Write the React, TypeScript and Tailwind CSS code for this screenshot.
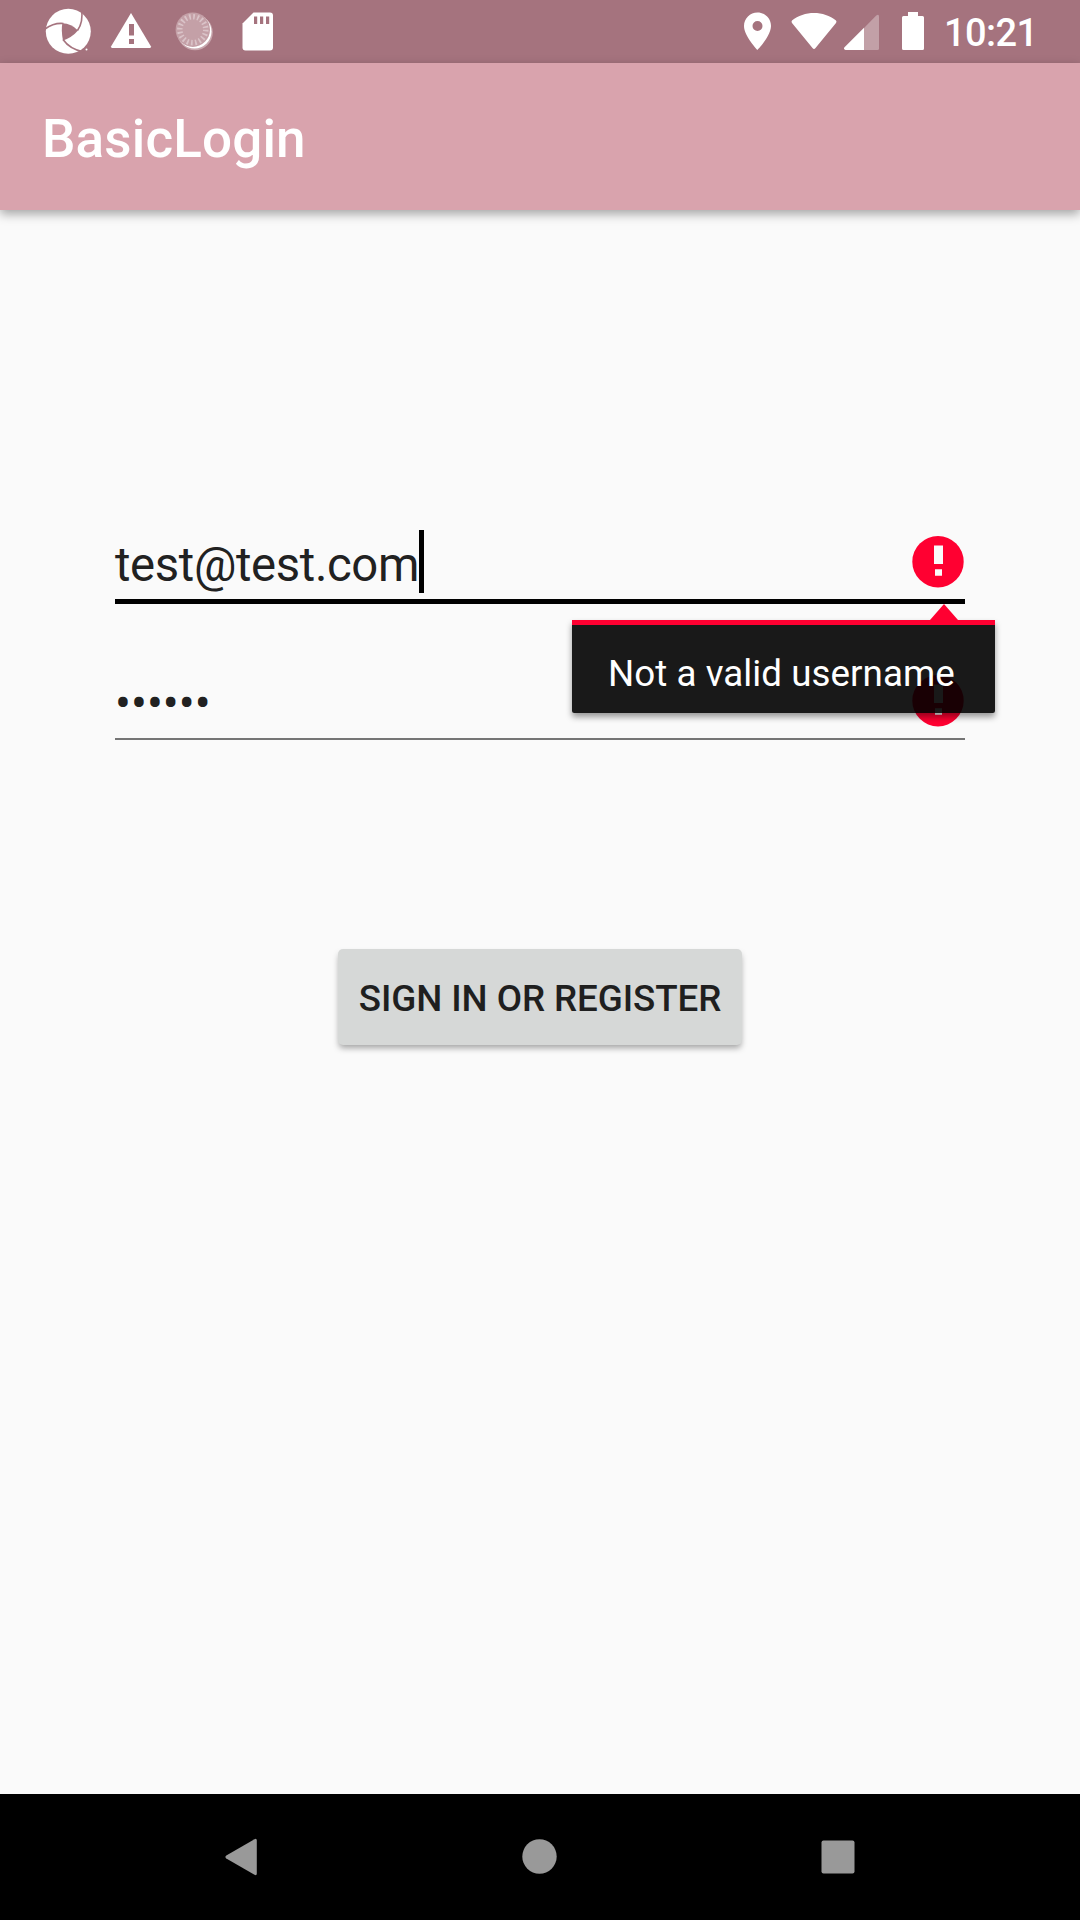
import React from "react";

function StatusIcons() {
  return (
    <svg className="h-[63px] w-[240px] shrink-0" viewBox="40 0 240 63" fill="#fff">
      <circle cx="68.3" cy="31.3" r="22.5" />
      <g fill="none" stroke="#a5737e" strokeWidth="1.6">
        <path d="M45 29 Q54 22.500 63.500 23.500" />
        <path d="M81.500 9 Q83.500 22 77.500 30.500" />
        <path d="M63 39.500 Q70 49.500 84 52" />
      </g>
      <path fill="#a5737e" d="M62.300 23.300 Q71.500 23.500 78 30.500 Q72 37.500 63 40.500 Q61 31 62.300 23.300Z" />
      <circle cx="86.500" cy="49.500" r="1" />
      <path d="M131 13 L151 46.500 Q151 48 149.500 48 H112.500 Q111 48 111 46.500Z" />
      <path fill="#a5737e" d="M129 24h5v11.500h-5zM129 39h5v5h-5z" />
      <circle cx="195" cy="32.500" r="17.800" fill="#c9a7ae" />
      <circle cx="194.500" cy="31.500" r="17" />
      <circle cx="192.800" cy="29.700" r="17.200" fill="#c4a0a7" />
      <circle cx="192.800" cy="29.700" r="13" fill="none" stroke="#dac3c8" strokeWidth="5.5" strokeDasharray="1.7 2.384" />
      <path d="M253.500 12.500H270a3 3 0 0 1 3 3V47.500a3 3 0 0 1-3 3H245.500a3 3 0 0 1-3-3V23.500Z" />
      <path fill="#a5737e" d="M254 16.500h3.200v7.500h-3.200zM260 16.500h3.200v7.500h-3.200zM266 16.500h3.200v7.500h-3.200z" />
    </svg>
  );
}

function SystemIcons() {
  return (
    <svg className="h-[63px] w-[200px] shrink-0" viewBox="740 0 200 63" fill="#fff">
      <path fillRule="evenodd" d="M757.500 12.500C750 12.500 744 18.500 744 26C744 36 757.500 50 757.500 50S771 36 771 26C771 18.500 765 12.500 757.500 12.500ZM757.500 21a5 5 0 1 1 0 10a5 5 0 0 1 0-10Z" />
      <path d="M792 20.500C804 10.500 824 10.500 836 20.500Q837 21.500 836 23L815.500 48Q814 50 812.500 48L792 23Q791 21.500 792 20.500Z" />
      <path fillOpacity=".32" d="M864 28L876 15.800Q879 13.500 879 16.500V48.500Q879 50 877.500 50H864Z" />
      <path d="M864 27.800V50H845.500Q843 49 844.500 47.200Z" />
      <path d="M908 12h10v4h4.500a1.500 1.500 0 0 1 1.500 1.500v31a1.500 1.500 0 0 1-1.500 1.500h-19a1.500 1.500 0 0 1-1.500-1.500v-31a1.500 1.500 0 0 1 1.500-1.500h4.500z" />
    </svg>
  );
}

function ErrorIcon() {
  return (
    <svg className="mr-[1px] h-[52px] w-[52px] shrink-0" viewBox="0 0 52 52">
      <circle cx="26" cy="25.700" r="25.700" fill="#ff0031" />
      <path fill="#fafafa" d="M22 9.500h9v18.500h-9zM23 33.200h7v6.500h-7z" />
    </svg>
  );
}

function ErrorPopup({ message }: { message: string }) {
  return (
    <div className="absolute top-[92.500px] right-[-29.500px] flex h-[93px] w-[423px] items-start rounded-b-[2px] border-t-[5px] border-[#ff0031] bg-black/90 pt-[27.500px] pl-[36.500px] shadow-[0_4px_6px_rgba(0,0,0,0.4)]">
      <svg className="absolute top-[-20.500px] right-[36.500px] h-[16px] w-[28px]" viewBox="0 0 28 16">
        <path fill="#ff0031" d="M14 0L28 16H0Z" />
      </svg>
      <span className="text-[36.750px] leading-[44px] tracking-[0.050px] whitespace-nowrap text-white">{message}</span>
    </div>
  );
}

export default function App() {
  return (
    <div className="flex h-[1920px] w-[1080px] flex-col overflow-hidden bg-[#fafafa] font-['Roboto',sans-serif]">
      <div className="flex h-[63px] shrink-0 items-center bg-[#a5737e] pl-[40px]">
        <StatusIcons />
        <div className="ml-auto flex items-center">
          <SystemIcons />
          <span className="w-[140px] pt-[4px] pl-[4px] text-[38px] leading-[59px] font-medium tracking-[-0.600px] text-white">10:21</span>
        </div>
      </div>
      <header className="flex h-[147px] shrink-0 items-center bg-[#d9a3ad] pt-[5px] pl-[42px] shadow-[0_4px_10px_rgba(0,0,0,0.35)]">
        <h1 className="text-[53px] leading-[62px] font-medium tracking-[0.150px] text-white">BasicLogin</h1>
      </header>
      <main className="flex flex-1 flex-col items-center pt-[317px]">
        <form className="flex w-[850px] flex-col items-center">
          <div className="relative z-10 flex h-[77px] w-full items-start justify-between border-b-[5px] border-black">
            <div className="flex items-start">
              <span className="mt-[10px] w-[304px] text-[47.250px] leading-[56px] tracking-[-0.360px] text-[#212121]">test@test.com</span>
              <span className="mt-[3px] h-[63px] w-[5px] bg-black" />
            </div>
            <div className="mt-[8.500px] flex">
              <ErrorIcon />
            </div>
            <ErrorPopup message="Not a valid username" />
          </div>
          <div className="mt-[62px] flex h-[74px] w-full items-start justify-between border-b-[2px] border-[#757575]">
            <span className="mt-[10px] text-[47.250px] leading-[56px] text-[#212121]">••••••</span>
            <div className="mt-[8.500px] flex">
              <ErrorIcon />
            </div>
          </div>
          <button
            type="button"
            className="mt-[209px] flex h-[96px] w-[404px] items-center justify-center rounded-[5px] bg-[#d6d8d7] pt-[3px] text-[36.750px] font-medium tracking-[-0.080px] whitespace-nowrap text-[#1f1f1f] shadow-[0_4px_6px_-1px_rgba(0,0,0,0.35)]"
          >
            SIGN IN OR REGISTER
          </button>
        </form>
      </main>
      <nav className="flex h-[126px] shrink-0 items-center justify-between bg-black px-[220px]">
        <svg className="h-[42px] w-[42px]" viewBox="0 0 42 42">
          <path fill="#999" d="M34.500 3.200Q36.800 2 36.800 4.500V37.500Q36.800 40 34.500 38.800L6.300 22.500Q4.500 21 6.300 19.500Z" />
        </svg>
        <svg className="h-[42px] w-[42px]" viewBox="0 0 42 42">
          <circle cx="20.500" cy="20.500" r="17.200" fill="#999" />
        </svg>
        <svg className="h-[42px] w-[42px]" viewBox="0 0 42 42">
          <rect x="3.500" y="4.500" width="33" height="33" rx="2" fill="#999" />
        </svg>
      </nav>
    </div>
  );
}
